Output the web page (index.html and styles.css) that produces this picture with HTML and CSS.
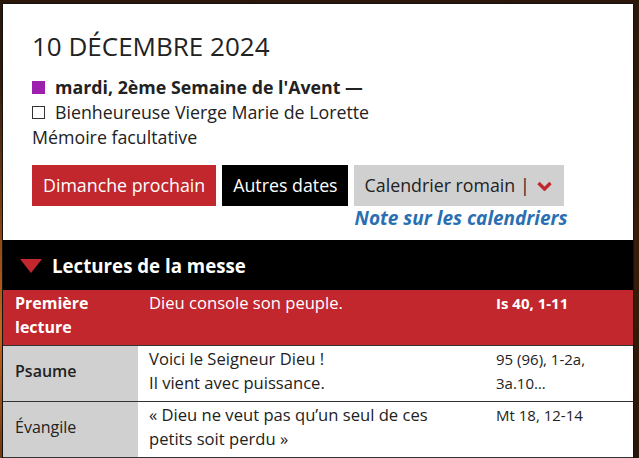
FILE: index.html
```html
<!DOCTYPE html>
<html lang="fr">
<head>
<meta charset="utf-8">
<title>10 décembre 2024</title>
<link rel="stylesheet" href="styles.css">
</head>
<body>
<div class="page">
  <section class="top">
    <h1 class="date">10 DÉCEMBRE 2024</h1>
    <div class="line"><span class="sq sq-purple"></span><b>mardi, 2ème Semaine de l'Avent —</b></div>
    <div class="line"><span class="sq sq-white"></span>Bienheureuse Vierge Marie de Lorette</div>
    <div class="line">Mémoire facultative</div>
    <div class="buttons">
      <a class="btn btn-red">Dimanche prochain</a>
      <a class="btn btn-black">Autres dates</a>
      <div class="cal">
        <a class="btn btn-gray">Calendrier romain |
          <svg class="chev" width="15" height="10" viewBox="0 0 15 10"><path d="M1.5 2 L7.5 8 L13.5 2" fill="none" stroke="#c1272d" stroke-width="3.4" stroke-linecap="butt" stroke-linejoin="miter"/></svg>
        </a>
        <a class="note">Note sur les calendriers</a>
      </div>
    </div>
  </section>
  <div class="head">
    <span class="tri"></span>
    <span class="head-title">Lectures de la messe</span>
  </div>
  <table class="readings">
    <colgroup><col class="c1"><col class="c2"><col class="c3"></colgroup>
    <tr class="first">
      <td class="lbl">Première lecture</td>
      <td class="txt">Dieu console son peuple.</td>
      <td class="ref">Is 40, 1-11</td>
    </tr>
    <tr>
      <td class="lbl lbl-b">Psaume</td>
      <td class="txt">Voici le Seigneur Dieu !<br>Il vient avec puissance.</td>
      <td class="ref">95 (96), 1-2a,<br>3a.10…</td>
    </tr>
    <tr>
      <td class="lbl">Évangile</td>
      <td class="txt">« Dieu ne veut pas qu’un seul de ces petits soit perdu »</td>
      <td class="ref">Mt 18, 12-14</td>
    </tr>
  </table>
</div>
</body>
</html>
```
FILE: styles.css
```css
html, body { margin: 0; padding: 0; }
body {
  width: 639px;
  height: 458px;
  overflow: hidden;
  font-family: "Open Sans", "DejaVu Sans", sans-serif;
  color: #222;
  background:
    radial-gradient(ellipse 40px 260px at 0 330px, #c9671e 0%, rgba(160,80,25,0.6) 50%, rgba(0,0,0,0) 100%),
    linear-gradient(180deg, #2b170a 0%, #3a1d0a 50%, #2a1608 100%);
}
.page {
  margin: 4px 0 0 3px;
  width: 630px;
  background: #fff;
  box-shadow: 1px 0 0 #111, 0 -1px 0 #111, -1px 0 0 #111;
}
.top { padding: 23px 29px 9px 29px; }
.date {
  margin: 0 0 10px 0;
  font-size: 26px;
  line-height: 38px;
  font-weight: 400;
  color: #222;
}
.line {
  font-size: 17.8px;
  line-height: 25px;
  display: flex;
  align-items: center;
}
.line b { font-weight: 700; }
.sq {
  display: inline-block;
  width: 13px;
  height: 13px;
  margin-right: 10px;
  box-sizing: border-box;
}
.sq-purple { background: #9c1fae; }
.sq-white { border: 1px solid #333; background: #fff; }
.buttons {
  display: flex;
  align-items: flex-start;
  margin-top: 15px;
  gap: 6px;
}
.btn {
  display: inline-flex;
  align-items: center;
  font-size: 17.8px;
  line-height: 25px;
  padding: 8px 11px;
  box-sizing: border-box;
  height: 41px;
}
.btn-red { background: #c1272d; color: #fff; }
.btn-black { background: #000; color: #fff; padding: 8px 10px 8px 11px; }
.cal { display: flex; flex-direction: column; align-items: flex-start; }
.btn-gray { background: #d0d0d0; color: #222; padding: 8px 12px 8px 11px; }
.chev { margin-left: 7px; margin-top: 1px; }
.note {
  font-size: 19px;
  line-height: 25px;
  font-weight: 700;
  font-style: italic;
  color: #2a6fb1;
  margin-left: 1px;
}
.head {
  background: #000;
  height: 50px;
  display: flex;
  align-items: center;
  padding-left: 17px;
}
.tri {
  width: 0;
  height: 0;
  border-left: 11px solid transparent;
  border-right: 11px solid transparent;
  border-top: 14px solid #c1272d;
  margin-right: 10px;
  margin-top: 2px;
}
.head-title {
  color: #fff;
  font-size: 18.7px;
  font-weight: 700;
}
.readings {
  width: 630px;
  border-collapse: collapse;
  table-layout: fixed;
}
.c1 { width: 135px; }
.c2 { width: 347px; }
.c3 { width: 148px; }
.readings td {
  font-size: 16px;
  line-height: 24px;
  vertical-align: top;
  padding: 1px 11px 6px 11px;
  border-bottom: 1px solid #333;
}
.readings tr { height: 55px; }
.readings .lbl {
  background: #d0d0d0;
  vertical-align: middle;
  padding-left: 12px;
  padding-top: 1px;
  padding-bottom: 6px;
}
.lbl-b { font-weight: 600; }
.readings .txt { background: #fff; font-size: 16.6px; }
.readings .ref { background: #fff; font-size: 15px; }
.readings tr.first td { background: #c1272d; color: #fff; }
.readings tr.first .lbl { font-weight: 700; vertical-align: top; }
.readings tr.first .ref { font-weight: 700; }
```
